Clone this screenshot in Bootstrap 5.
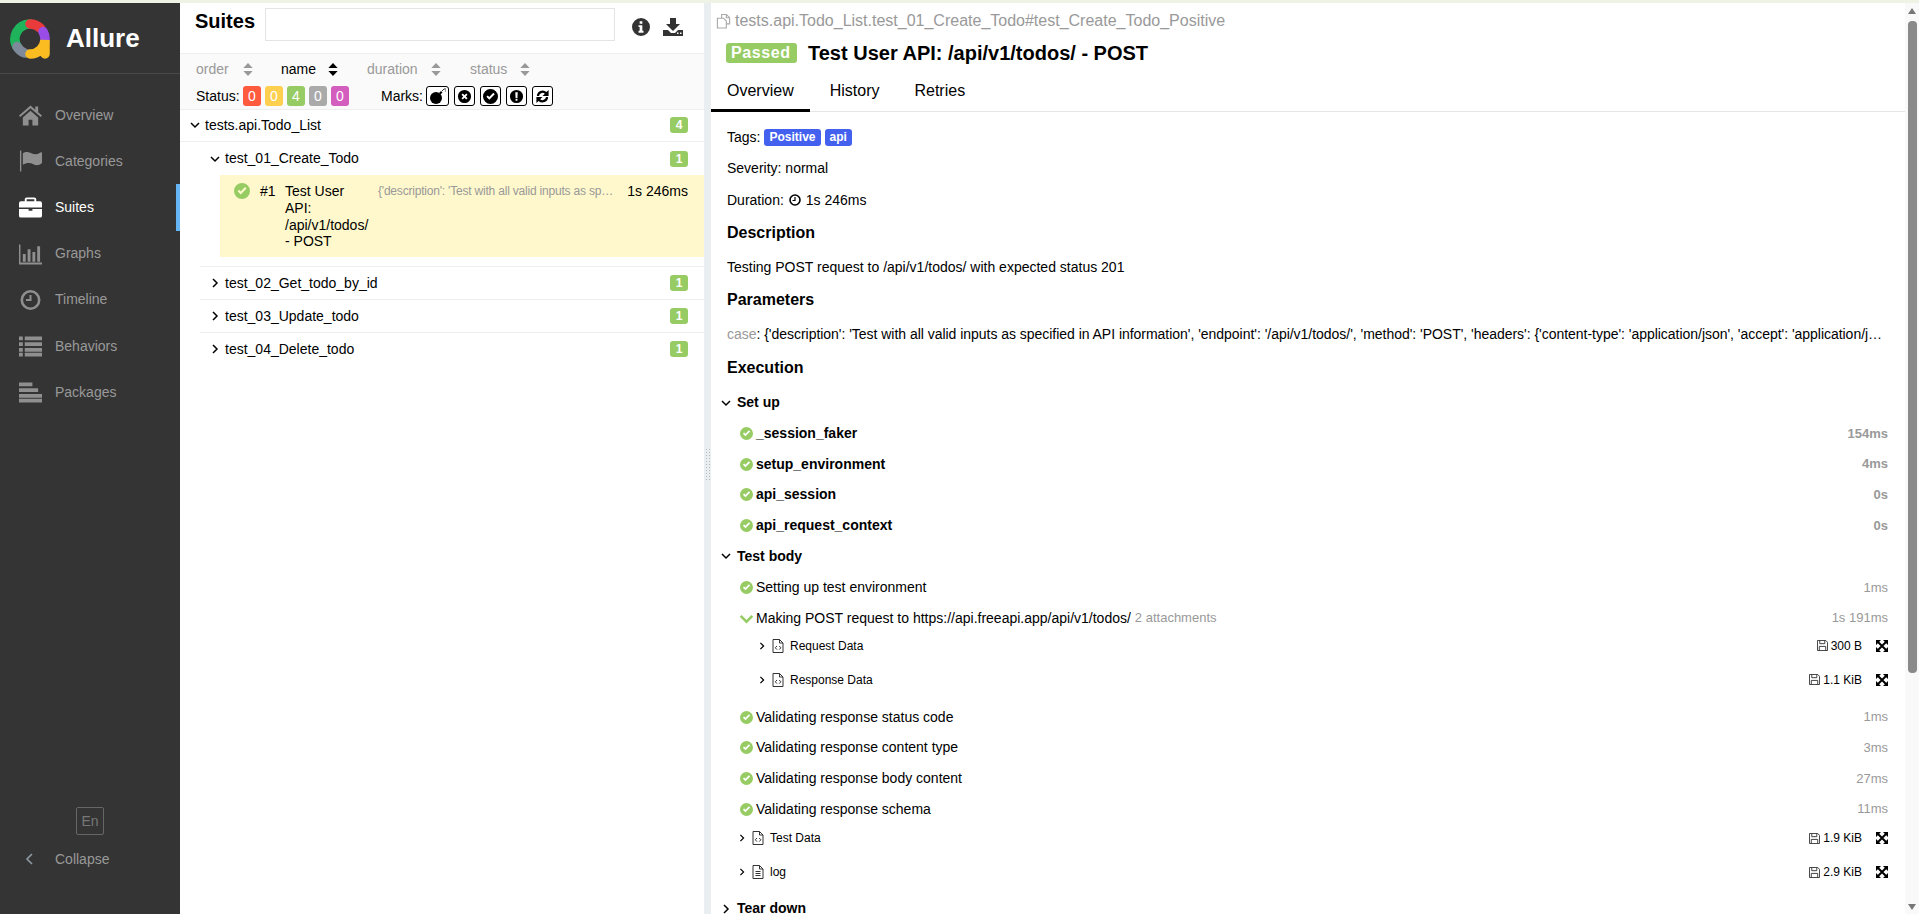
<!DOCTYPE html>
<html lang="en">
<head>
    <meta charset="UTF-8">
    <meta name="viewport" content="width=device-width, initial-scale=1.0">
    <title>Allure Report</title>
    <link href="https://cdn.jsdelivr.net/npm/bootstrap@5.3.0/dist/css/bootstrap.min.css" rel="stylesheet">
    <style>
        html, body { height: 100%; overflow: hidden; }
        body { font-family: "Liberation Sans", Arial, sans-serif; font-size: 14px; color: #000; border-top: 3px solid #eef3e6; }
        .al-app { height: 911px; }
        svg { display: block; flex: none; }

        /* sidebar */
        .al-side { width: 180px; background: #343434; color: #999; flex: none; }
        .al-brand { height: 71px; padding-left: 10px; gap: 16px; border-bottom: 1px solid #4a4a4a; color: #fff; font-size: 26px; font-weight: 700; }
        .al-brand svg { margin-top: 2px; }
        .al-menu { padding-top: 18px; }
        .al-menu a { height: 46.2px; padding-left: 19px; gap: 13px; color: #999; text-decoration: none; }
        .al-menu a svg { width: 23px; height: 22px; fill: #8f8f8f; }
        .al-menu a.al-on { color: #fff; box-shadow: inset -4px 0 0 #65b5f6; }
        .al-menu a.al-on svg { fill: #fff; }
        .al-lang { width: 28px; height: 28px; border: 1px solid #666; border-radius: 2px; color: #777; margin: 0 0 1px 76px; }
        .al-collapse { height: 46px; padding-left: 25px; gap: 22px; margin-bottom: 32px; }

        /* list pane */
        .al-list { width: 524px; flex: none; }
        .al-head { height: 51px; padding-left: 15px; border-bottom: 1px solid #eee; }
        .al-head h1 { font-size: 20px; font-weight: 700; width: 70px; margin: -14px 0 0 0; }
        .al-search { width: 350px; height: 33px; border: 1px solid #e4e4e4; border-radius: 0; margin-top: -8px; }
        .al-tool { margin-top: -2px; fill: #333; }
        .al-filters { height: 56px; background: #fafafa; border-bottom: 1px solid #eee; padding: 5px 0 0 16px; }
        .al-sort { height: 20px; color: #999; }
        .al-sort span { display: inline-flex; align-items: center; justify-content: space-between; }
        .al-sort .al-dark { color: #000; }
        .al-chip { width: 18px; height: 20px; border-radius: 3px; color: #fff; }
        .al-bg-red { background: #fd5a3e; }
        .al-bg-yellow { background: #ffd050; }
        .al-bg-green { background: #97cc64; }
        .al-bg-gray { background: #aaa; }
        .al-bg-pink { background: #d35ebe; }
        .al-mark { height: 20px; width: 21px; border: 1px solid #000; border-radius: 3px; background: #fff; }
        .al-node { height: 33px; padding: 0 16px 0 10px; gap: 5px; border-bottom: 1px solid #eee; margin-left: 20px; }
        .al-node.al-root { margin-left: 0; height: 32px; padding-bottom: 1px; }
        .al-node.al-last { height: 32.5px; }
        .al-count { width: 18px; height: 16px; background: #97cc64; color: #fff; border-radius: 3px; font-size: 12px; font-weight: 700; padding: 0; line-height: 16px; }
        .al-pick { margin-left: 40px; height: 82px; background: #fff8cc; padding: 8px 16px 0 14px; line-height: 16.800px; }
        .al-pick-title { width: 88px; margin-right: 5px; }
        .al-pick-desc { color: #999; font-size: 12px; width: 237px; letter-spacing: -.2px; }
        .al-sep { margin: 9px 0 0 20px; border-top: 1px solid #eee; }

        /* gutter between panes */
        .al-gutter { width: 7px; flex: none; background: #e9eef1; }
        .al-grip { width: 6px; height: 33px; margin: 445px 0 0 1px; background-image: radial-gradient(#bbb 1px, transparent 1px); background-size: 3px 3px; }

        /* detail pane */
        .al-detail { min-width: 0; }
        .al-path { height: 36px; color: #999; font-size: 16px; padding-left: 5px; gap: 4px; }
        .al-titlerow { height: 28px; padding-left: 15px; gap: 11px; }
        .al-passed { background: #97cc64; color: #fff; font-size: 16px; font-weight: 700; letter-spacing: .6px; border-radius: 3px; padding: 0 5px; width: 71px; height: 20px; line-height: 20px; }
        .al-titlerow h2 { font-size: 20px; font-weight: 700; margin: 0; }
        .al-tabs { height: 45px; border-bottom: 1px solid #e6e6e6; font-size: 16px; }
        .al-tabs a { color: #000; text-decoration: none; padding: 6px 19px 4px 16px; height: 45px; display: flex; align-items: center; }
        .al-tabs a.al-on { border-bottom: 3px solid #000; padding-bottom: 1px; padding-right: 16px; }
        .al-tabs a.al-on + a { padding-left: 20px; }
        .al-body { padding: 10px 17px 0 16px; }
        .al-line { height: 31.300px; gap: 5px; }
        .al-line.al-tags { gap: 4px; }
        .al-tag { background: #4361ee; color: #fff; font-size: 12px; font-weight: 700; border-radius: 3px; padding: 0 5px; height: 17px; line-height: 17px; }
        .al-h { font-size: 16px; font-weight: 700; height: 34px; }
        .al-desc { margin-bottom: 2px; }
        .al-case { height: 32px; line-height: 31px; margin-top: 2px; letter-spacing: -.03px; }
        .al-muted { color: #999; }
        .al-stage { margin-left: -6px; height: 31px; font-weight: 700; gap: 6px; margin-top: 2px; }
        .al-stage.al-flat { margin-top: 0; }
        .al-stage.al-end { margin-top: 4px; }
        .al-step { margin-left: 13px; height: 30.7px; gap: 3px; }
        .al-step b { font-weight: 700; }
        .al-step.al-open { height: 31px; }
        .al-step.al-after { margin-top: 5px; }
        .al-step .al-time { margin-left: auto; color: #999; font-size: 13px; }
        .al-att { height: 34px; font-size: 12px; gap: 6px; }
        .al-att.al-l1 { margin-left: 11px; }
        .al-att.al-l1.al-first { margin-top: -3.500px; }
        .al-att.al-l2 { margin-left: 31px; }
        .al-att.al-l2.al-first { margin-top: -4.800px; }
        .al-size { margin-left: auto; gap: 3px; margin-right: 8px; }
        .al-ok { width: 13px; height: 13px; fill: #97cc64; }
        .al-dim { font-size: 13px; color: #999; margin-left: 1px; }

        .al-scroll { width: 14px; flex: none; background: #f9f9f9; padding-left: 3px; }
        .al-up { width: 0; height: 0; border: 4.500px solid transparent; border-bottom: 6px solid #777; border-top: 0; margin-top: 5px; }
        .al-thumb { width: 9px; height: 652px; background: #8a8a8a; border-radius: 4px; margin-top: 7px; }
        .al-down { width: 0; height: 0; border: 4.500px solid transparent; border-top: 6px solid #777; border-bottom: 0; margin-bottom: 4px; }
    </style>
</head>
<body>
    <svg width="0" height="0" style="position:absolute">
        <symbol id="i-home" viewBox="0 0 24 22"><path d="M12 1 0 11.5l1.3 1.6L12 4l10.700 9.100 1.300-1.600L20 8V2h-3v3.400zM4 13.600V22h6v-6h4v6h6v-8.400L12 6.600z"/></symbol>
        <symbol id="i-flag" viewBox="0 0 24 22"><path d="M1 0h1.400v22H1zM4 3c3-2.400 6-1.600 9 0s6 1.400 9-.6C23.600 1.400 24 2 24 3v10c-3 2.600-6 3-9 1.400s-7-2-11 .6z"/></symbol>
        <symbol id="i-case" viewBox="0 0 24 22"><path d="M8 1h8a2 2 0 0 1 2 2v2h4a2 2 0 0 1 2 2v4.500H0V7a2 2 0 0 1 2-2h4V3a2 2 0 0 1 2-2zm0 2v2h8V3zM0 13h10v2h4v-2h10v7a2 2 0 0 1-2 2H2a2 2 0 0 1-2-2z"/></symbol>
        <symbol id="i-graph" viewBox="0 0 24 22"><path d="M0 1h1.500v19H24v2H0zM4 11h3v8H4zM9 6h3v13H9zM14 9h3v10h-3zM19 3h3v16h-3z"/></symbol>
        <symbol id="i-clock" viewBox="0 0 22 22"><path d="M11 1a10 10 0 1 0 0 20 10 10 0 0 0 0-20zm0 2.600a7.400 7.400 0 1 1 0 14.800 7.400 7.400 0 0 1 0-14.800zM10 6h2v6H6.500v-2H10z"/></symbol>
        <symbol id="i-list" viewBox="0 0 24 22"><path d="M0 1h4v4H0zM6 1h18v4H6zM0 7h4v4H0zM6 7h18v4H6zM0 13h4v4H0zM6 13h18v4H6zM0 18h4v4H0zM6 18h18v4H6z"/></symbol>
        <symbol id="i-pack" viewBox="0 0 24 22"><path d="M0 1h14v4H0zM0 7h20v4H0zM0 13h24v4H0zM0 18h24v4H0z"/></symbol>
        <symbol id="i-check" viewBox="0 0 16 16"><path fill-rule="evenodd" d="M8 0a8 8 0 1 1 0 16A8 8 0 0 1 8 0zM3.600 8.300 6.700 11.400l5.800-5.800-1.500-1.500-4.300 4.300-1.600-1.600z"/></symbol>
        <symbol id="i-times" viewBox="0 0 16 16"><path fill-rule="evenodd" d="M8 1a7 7 0 1 1 0 14A7 7 0 0 1 8 1zM4.800 6.200 6.600 8l-1.800 1.800 1.400 1.400L8 9.400l1.800 1.800 1.400-1.400L9.400 8l1.800-1.800-1.400-1.400L8 6.600 6.200 4.800z"/></symbol>
        <symbol id="i-bang" viewBox="0 0 16 16"><path fill-rule="evenodd" d="M8 1a7 7 0 1 1 0 14A7 7 0 0 1 8 1zM6.700 3.500l.3 6h2l.3-6zM7 10.500v2h2v-2z"/></symbol>
        <symbol id="i-info" viewBox="0 0 16 16"><path fill-rule="evenodd" d="M8 0a8 8 0 1 1 0 16A8 8 0 0 1 8 0zM6.800 2.800v2.300h2.400V2.800zM5.800 6.500v1.500h1v3.300h-1v1.700h4.400v-1.700h-1V6.500z"/></symbol>
        <symbol id="i-down" viewBox="0 0 20 18"><path d="M7 0h6v6h4l-7 7-7-7h4zM0 12h5l3 3h4l3-3h5v6H0zm14 2.500v1.500h1.500v-1.500zm3 0v1.500h1.500v-1.500z"/></symbol>
        <symbol id="i-spin" viewBox="0 0 16 16"><path d="M2 7.500A6 6 0 0 1 12.200 3.300L14.500 1v6.500H8l2.500-2.500A3.800 3.800 0 0 0 4.300 7.500zM14 8.500A6 6 0 0 1 3.800 12.700L1.500 15V8.500H8l-2.500 2.500A3.800 3.800 0 0 0 11.700 8.500z"/></symbol>
        <symbol id="i-bomb" viewBox="0 0 18 16"><circle cx="7" cy="10" r="6"/><path d="m10 5 2-2 1.500 1.500-2 2z"/><path d="M13 3l2-2M15 1h2M16 3h1" stroke="#000" stroke-width=".8" fill="none"/></symbol>
        <symbol id="i-code" viewBox="0 0 12 14"><path d="M1 .5h6.500l3.500 3.500v9.500H1zM7.500.5V4H11M5 7 3.300 8.800 5 10.600M7.200 7 8.900 8.800 7.200 10.600" fill="none" stroke="#333" stroke-width="1"/></symbol>
        <symbol id="i-text" viewBox="0 0 12 14"><path d="M1 .5h6.500l3.500 3.500v9.500H1zM7.500.5V4H11M3.500 6.500h5M3.500 8.500h5M3.500 10.500h5" fill="none" stroke="#333" stroke-width="1"/></symbol>
        <symbol id="i-save" viewBox="0 0 12 12"><path d="M.5.500h9l2 2v9H.5zM3 .5v3.500h5.500V.5M2.500 11.500V7h7v4.500" fill="none" stroke="#333" stroke-width="1"/></symbol>
        <symbol id="i-expand" viewBox="0 0 12 12"><path d="M0 0h5L0 5zM12 0v5L7 0zM0 12V7l5 5zM12 12H7l5-5z"/><path d="M2 2l8 8M10 2l-8 8" stroke="#000" stroke-width="2"/></symbol>
        <symbol id="i-copy" viewBox="0 0 16 16"><path d="M6 5V1h5l3.500 3.500V11H11M11 1v3.500h3.500M1.500 5H8l3 3v7.500H1.500z" fill="none" stroke="#aaa" stroke-width="1.200"/></symbol>
        <symbol id="i-open" viewBox="0 0 10 10"><path d="M1 3l4 4 4-4" fill="none" stroke="#000" stroke-width="1.500"/></symbol>
        <symbol id="i-shut" viewBox="0 0 10 10"><path d="M3 1l4 4-4 4" fill="none" stroke="#000" stroke-width="1.500"/></symbol>
        <symbol id="i-sort" viewBox="0 0 10 14"><path d="M5 0 10 5.500H0zM5 14 0 8.500h10z"/></symbol>
    </svg>

    <div class="al-app d-flex">
        <aside class="al-side d-flex flex-column">
            <div class="al-brand d-flex align-items-center">
                <svg width="40" height="40" viewBox="0 0 40 40" fill="none" stroke-width="9.500" stroke-linecap="round">
                    <path d="M7.700 28.600A15 15 0 0 1 20 5" stroke="#1fb35b"/>
                    <path d="M20 5A15 15 0 0 1 30.600 9.400" stroke="#e93a3c"/>
                    <path d="M33 12.500A15 15 0 0 1 34.500 23.900" stroke="#9a4de6"/>
                    <path d="M7 27.500A15 15 0 0 0 14.900 34.100" stroke="#7e8a99"/>
                    <path d="M20 35A15 15 0 0 0 35 21V35" stroke="#fbbc22"/>
                </svg>
                <span>Allure</span>
            </div>
            <nav class="al-menu">
                <a class="d-flex align-items-center" href="#"><svg><use href="#i-home"/></svg>Overview</a>
                <a class="d-flex align-items-center" href="#"><svg><use href="#i-flag"/></svg>Categories</a>
                <a class="d-flex align-items-center al-on" href="#"><svg><use href="#i-case"/></svg>Suites</a>
                <a class="d-flex align-items-center" href="#"><svg><use href="#i-graph"/></svg>Graphs</a>
                <a class="d-flex align-items-center" href="#"><svg><use href="#i-clock"/></svg>Timeline</a>
                <a class="d-flex align-items-center" href="#"><svg><use href="#i-list"/></svg>Behaviors</a>
                <a class="d-flex align-items-center" href="#"><svg><use href="#i-pack"/></svg>Packages</a>
            </nav>
            <div class="al-lang d-flex align-items-center justify-content-center mt-auto">En</div>
            <div class="al-collapse d-flex align-items-center">
                <svg width="8" height="12" viewBox="0 0 8 12"><path d="M7 1 2 6l5 5" fill="none" stroke="#8f9aa5" stroke-width="1.600"/></svg>
                <span>Collapse</span>
            </div>
        </aside>

        <section class="al-list">
            <div class="al-head d-flex align-items-center">
                <h1>Suites</h1>
                <input class="form-control al-search" type="text">
                <svg class="al-tool" style="margin-left:17px;margin-right:13px" width="18" height="18"><use href="#i-info"/></svg>
                <svg class="al-tool" width="20" height="18"><use href="#i-down"/></svg>
            </div>
            <div class="al-filters">
                <div class="al-sort d-flex align-items-center">
                    <span style="width:57px">order <svg width="10" height="13" fill="#999"><use href="#i-sort"/></svg></span>
                    <span class="al-dark" style="width:57px;margin-left:28px">name <svg width="10" height="13" fill="#000"><use href="#i-sort"/></svg></span>
                    <span style="width:74px;margin-left:29px">duration <svg width="10" height="13" fill="#999"><use href="#i-sort"/></svg></span>
                    <span style="width:60px;margin-left:29px">status <svg width="10" height="13" fill="#999"><use href="#i-sort"/></svg></span>
                </div>
                <div class="d-flex align-items-center" style="margin-top:6.500px">
                    <span style="width:47px">Status:</span>
                    <div class="d-flex gap-1">
                        <span class="al-chip al-bg-red d-flex align-items-center justify-content-center">0</span>
                        <span class="al-chip al-bg-yellow d-flex align-items-center justify-content-center">0</span>
                        <span class="al-chip al-bg-green d-flex align-items-center justify-content-center">4</span>
                        <span class="al-chip al-bg-gray d-flex align-items-center justify-content-center">0</span>
                        <span class="al-chip al-bg-pink d-flex align-items-center justify-content-center">0</span>
                    </div>
                    <span style="margin-left:32px;width:45px">Marks:</span>
                    <div class="d-flex" style="gap:5px">
                        <span class="al-mark d-flex align-items-center justify-content-center" style="width:23px"><svg width="18" height="16"><use href="#i-bomb"/></svg></span>
                        <span class="al-mark d-flex align-items-center justify-content-center"><svg width="15" height="15"><use href="#i-times"/></svg></span>
                        <span class="al-mark d-flex align-items-center justify-content-center"><svg width="15" height="15"><use href="#i-check"/></svg></span>
                        <span class="al-mark d-flex align-items-center justify-content-center"><svg width="15" height="15"><use href="#i-bang"/></svg></span>
                        <span class="al-mark d-flex align-items-center justify-content-center"><svg width="15" height="15"><use href="#i-spin"/></svg></span>
                    </div>
                </div>
            </div>
            <div class="al-node al-root d-flex align-items-center">
                <svg width="10" height="10"><use href="#i-open"/></svg>
                <span class="flex-grow-1">tests.api.Todo_List</span>
                <span class="badge al-count">4</span>
            </div>
            <div class="al-node d-flex align-items-center border-0">
                <svg width="10" height="10"><use href="#i-open"/></svg>
                <span class="flex-grow-1">test_01_Create_Todo</span>
                <span class="badge al-count">1</span>
            </div>
            <div class="al-pick d-flex">
                <svg class="al-ok" style="width:16px;height:16px;margin-right:10px"><use href="#i-check"/></svg>
                <span style="width:25px">#1</span>
                <span class="al-pick-title">Test User API: /api/v1/todos/ - POST</span>
                <span class="al-pick-desc text-nowrap">{'description': 'Test with all valid inputs as sp…</span>
                <span class="ms-auto">1s 246ms</span>
            </div>
            <div class="al-sep"></div>
            <div class="al-node d-flex align-items-center">
                <svg width="10" height="10"><use href="#i-shut"/></svg>
                <span class="flex-grow-1">test_02_Get_todo_by_id</span>
                <span class="badge al-count">1</span>
            </div>
            <div class="al-node d-flex align-items-center">
                <svg width="10" height="10"><use href="#i-shut"/></svg>
                <span class="flex-grow-1">test_03_Update_todo</span>
                <span class="badge al-count">1</span>
            </div>
            <div class="al-node al-last d-flex align-items-center border-0">
                <svg width="10" height="10"><use href="#i-shut"/></svg>
                <span class="flex-grow-1">test_04_Delete_todo</span>
                <span class="badge al-count">1</span>
            </div>
        </section>

        <div class="al-gutter"><div class="al-grip"></div></div>

        <section class="al-detail flex-grow-1 overflow-hidden">
            <div class="al-path d-flex align-items-center"><svg width="15" height="16"><use href="#i-copy"/></svg>tests.api.Todo_List.test_01_Create_Todo#test_Create_Todo_Positive</div>
            <div class="al-titlerow d-flex align-items-center">
                <span class="al-passed">Passed</span>
                <h2>Test User API: /api/v1/todos/ - POST</h2>
            </div>
            <nav class="al-tabs d-flex">
                <a class="al-on" href="#">Overview</a>
                <a href="#">History</a>
                <a href="#">Retries</a>
            </nav>
            <div class="al-body">
                <div class="al-line al-tags d-flex align-items-center">Tags: <span class="al-tag">Positive</span><span class="al-tag">api</span></div>
                <div class="al-line d-flex align-items-center">Severity: normal</div>
                <div class="al-line d-flex align-items-center">Duration: <svg width="12" height="12" viewBox="0 0 12 12"><circle cx="6" cy="6" r="5" fill="none" stroke="#000" stroke-width="1.600"/><path d="M6 3v3.500H3.500" fill="none" stroke="#000" stroke-width="1.200"/></svg> 1s 246ms</div>
                <div class="al-h al-desc d-flex align-items-center">Description</div>
                <div class="al-line d-flex align-items-center">Testing POST request to /api/v1/todos/ with expected status 201</div>
                <div class="al-h d-flex align-items-center">Parameters</div>
                <div class="al-case text-nowrap"><span class="al-muted">case</span>: {'description': 'Test with all valid inputs as specified in API information', 'endpoint': '/api/v1/todos/', 'method': 'POST', 'headers': {'content-type': 'application/json', 'accept': 'application/j…</div>
                <div class="al-h d-flex align-items-center">Execution</div>

                <div class="al-stage d-flex align-items-center"><svg width="10" height="10"><use href="#i-open"/></svg>Set up</div>
                <div class="al-step d-flex align-items-center"><svg class="al-ok"><use href="#i-check"/></svg><b>_session_faker</b><span class="al-time fw-bold">154ms</span></div>
                <div class="al-step d-flex align-items-center"><svg class="al-ok"><use href="#i-check"/></svg><b>setup_environment</b><span class="al-time fw-bold">4ms</span></div>
                <div class="al-step d-flex align-items-center"><svg class="al-ok"><use href="#i-check"/></svg><b>api_session</b><span class="al-time fw-bold">0s</span></div>
                <div class="al-step d-flex align-items-center"><svg class="al-ok"><use href="#i-check"/></svg><b>api_request_context</b><span class="al-time fw-bold">0s</span></div>

                <div class="al-stage al-flat d-flex align-items-center"><svg width="10" height="10"><use href="#i-open"/></svg>Test body</div>
                <div class="al-step d-flex align-items-center"><svg class="al-ok"><use href="#i-check"/></svg>Setting up test environment<span class="al-time">1ms</span></div>
                <div class="al-step al-open d-flex align-items-center"><svg class="al-ok" viewBox="0 0 10 10"><path d="M.5 3 5 7.500 9.500 3" fill="none" stroke="#97cc64" stroke-width="2"/></svg>Making POST request to https://api.freeapi.app/api/v1/todos/<span class="al-dim">2 attachments</span><span class="al-time">1s 191ms</span></div>
                <div class="al-att al-l2 al-first d-flex align-items-center"><svg width="8" height="10"><use href="#i-shut"/></svg><svg width="12" height="14"><use href="#i-code"/></svg>Request Data<span class="al-size d-flex align-items-center"><svg width="11" height="11"><use href="#i-save"/></svg>300 B</span><svg width="12" height="12"><use href="#i-expand"/></svg></div>
                <div class="al-att al-l2 d-flex align-items-center"><svg width="8" height="10"><use href="#i-shut"/></svg><svg width="12" height="14"><use href="#i-code"/></svg>Response Data<span class="al-size d-flex align-items-center"><svg width="11" height="11"><use href="#i-save"/></svg>1.1 KiB</span><svg width="12" height="12"><use href="#i-expand"/></svg></div>
                <div class="al-step al-after d-flex align-items-center"><svg class="al-ok"><use href="#i-check"/></svg>Validating response status code<span class="al-time">1ms</span></div>
                <div class="al-step d-flex align-items-center"><svg class="al-ok"><use href="#i-check"/></svg>Validating response content type<span class="al-time">3ms</span></div>
                <div class="al-step d-flex align-items-center"><svg class="al-ok"><use href="#i-check"/></svg>Validating response body content<span class="al-time">27ms</span></div>
                <div class="al-step d-flex align-items-center"><svg class="al-ok"><use href="#i-check"/></svg>Validating response schema<span class="al-time">11ms</span></div>
                <div class="al-att al-l1 al-first d-flex align-items-center"><svg width="8" height="10"><use href="#i-shut"/></svg><svg width="12" height="14"><use href="#i-code"/></svg>Test Data<span class="al-size d-flex align-items-center"><svg width="11" height="11"><use href="#i-save"/></svg>1.9 KiB</span><svg width="12" height="12"><use href="#i-expand"/></svg></div>
                <div class="al-att al-l1 d-flex align-items-center"><svg width="8" height="10"><use href="#i-shut"/></svg><svg width="12" height="14"><use href="#i-text"/></svg>log<span class="al-size d-flex align-items-center"><svg width="11" height="11"><use href="#i-save"/></svg>2.9 KiB</span><svg width="12" height="12"><use href="#i-expand"/></svg></div>
                <div class="al-stage al-end d-flex align-items-center"><svg width="10" height="10"><use href="#i-shut"/></svg>Tear down</div>
            </div>
        </section>

        <div class="al-scroll d-flex flex-column">
            <div class="al-up"></div>
            <div class="al-thumb"></div>
            <div class="al-down mt-auto"></div>
        </div>
    </div>

    <script src="https://cdn.jsdelivr.net/npm/bootstrap@5.3.0/dist/js/bootstrap.bundle.min.js"></script>
</body>
</html>
